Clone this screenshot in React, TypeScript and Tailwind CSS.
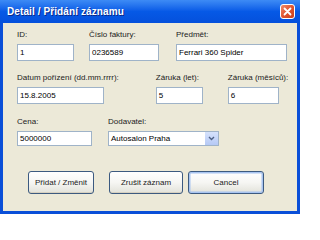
import React from "react";

const font = { fontFamily: '"Liberation Sans", Arial, sans-serif' };

function Field({ label, value, w, h = "h-[17px]" }: { label: string; value: string; w: string; h?: string }) {
  return (
    <div className="flex flex-col">
      <div className="text-[8px] leading-[10px] text-[#222] whitespace-nowrap">{label}</div>
      <div className={`mt-[4px] ${w} ${h} bg-white border border-[#9fb3c8] flex items-center pl-[2px] text-[8px] text-black whitespace-nowrap overflow-hidden`}>
        {value}
      </div>
    </div>
  );
}

function XPButton({ label, w, def }: { label: string; w: string; def?: boolean }) {
  return (
    <div
      className={`${w} h-[23px] rounded-[3px] border border-[#3c5a80] bg-gradient-to-b from-white via-[#f6f6f3] to-[#e2e2da] flex items-center justify-center text-[8px] text-[#222] ${
        def ? "shadow-[inset_0_0_0_1.5px_#a8c4f0]" : "shadow-[inset_0_-1px_0_#d6d0c0]"
      }`}
    >
      {label}
    </div>
  );
}

export default function App() {
  return (
    <div className="w-[300px] h-[214px] flex flex-col bg-[#0a4fd8] overflow-hidden" style={font}>
      {/* Title bar */}
      <div className="h-[23px] flex items-center justify-between bg-gradient-to-b from-[#3d8bf5] via-[#0659e6] to-[#0550dc] pl-[7px] pr-[5px]">
        <div className="text-white font-bold text-[10px] tracking-[0.1px] [text-shadow:1px_1px_0_#0a2a8a]">
          Detail / Přidání záznamu
        </div>
        <div className="w-[15px] h-[15px] rounded-[3px] border border-white bg-gradient-to-br from-[#ef8a6a] via-[#e0542f] to-[#c8401f] flex items-center justify-center">
          <svg width="9" height="9" viewBox="0 0 9 9">
            <path d="M1.5 1.5 L7.5 7.5 M7.5 1.5 L1.5 7.5" stroke="white" strokeWidth="1.8" strokeLinecap="round" />
          </svg>
        </div>
      </div>
      {/* Body */}
      <div className="flex-1 mx-[3px] mb-[3px] bg-[#ece9d8] flex flex-col pl-[14px] pt-[7px]">
        {/* Row 1 */}
        <div className="flex">
          <Field label="ID:" value="1" w="w-[57px]" />
          <div className="ml-[15px]">
            <Field label="Číslo faktury:" value="0236589" w="w-[70px]" />
          </div>
          <div className="ml-[17px]">
            <Field label="Předmět:" value="Ferrari 360 Spider" w="w-[111px]" />
          </div>
        </div>
        {/* Row 2 */}
        <div className="flex mt-[12px]">
          <Field label="Datum pořízení (dd.mm.rrrr):" value="15.8.2005" w="w-[87px]" />
          <div className="ml-[37px]">
            <Field label="Záruka (let):" value="5" w="w-[47px]" />
          </div>
          <div className="ml-[25px]">
            <Field label="Záruka (měsíců):" value="6" w="w-[51px]" />
          </div>
        </div>
        {/* Row 3 */}
        <div className="flex mt-[13px]">
          <Field label="Cena:" value="5000000" w="w-[75px]" h="h-[15px]" />
          <div className="ml-[16px] flex flex-col">
            <div className="text-[8px] leading-[10px] text-[#222]">Dodavatel:</div>
            <div className="mt-[4px] w-[111px] h-[15px] bg-white border border-[#9fb3c8] flex items-center text-[8px] text-black">
              <div className="flex-1 pl-[2px]">Autosalon Praha</div>
              <div className="w-[13px] h-[13px] bg-gradient-to-b from-[#d6e2fc] to-[#b5c9f5] flex items-center justify-center">
                <svg width="7" height="5" viewBox="0 0 7 5">
                  <path d="M1 1 L3.5 3.5 L6 1" stroke="#4d6185" strokeWidth="1.4" fill="none" />
                </svg>
              </div>
            </div>
          </div>
        </div>
        {/* Buttons */}
        <div className="flex mt-[25px] ml-[11px]">
          <XPButton label="Přidat / Změnit" w="w-[66px]" />
          <div className="ml-[15px]">
            <XPButton label="Zrušit záznam" w="w-[74px]" />
          </div>
          <div className="ml-[5px]">
            <XPButton label="Cancel" w="w-[76px]" def />
          </div>
        </div>
      </div>
    </div>
  );
}
